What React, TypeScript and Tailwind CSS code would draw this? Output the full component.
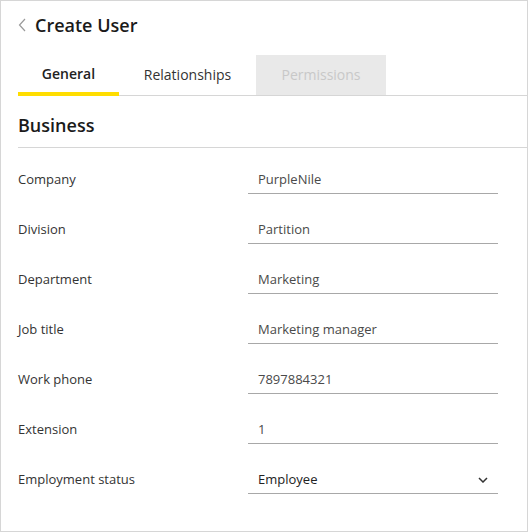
const rows = [
  { label: "Company", value: "PurpleNile" },
  { label: "Division", value: "Partition" },
  { label: "Department", value: "Marketing" },
  { label: "Job title", value: "Marketing manager" },
  { label: "Work phone", value: "7897884321" },
  { label: "Extension", value: "1" },
];

const App = () => {
  return (
    <div
      className="w-[528px] h-[532px] border border-[#d6d6d6] bg-white text-[#333]"
      style={{ fontFamily: '"Open Sans", "Noto Sans", sans-serif' }}
    >
      <div className="flex items-center pl-[17px] pt-[11px] h-[26px] box-content">
        <svg width="9" height="14" viewBox="0 0 9 14" className="text-[#9a9a9a]">
          <path d="M7 1 L1.5 7 L7 13" fill="none" stroke="currentColor" strokeWidth="1.2" />
        </svg>
        <span className="ml-[8px] text-[18px] font-semibold text-[#1a1a1a] leading-none">
          Create User
        </span>
      </div>

      <div className="ml-[17px] mt-[17px] flex border-b border-[#d6d6d6] h-[41px]">
        <div className="w-[101px] h-[41px] flex items-center justify-center text-[14px] font-semibold text-[#222] border-b-4 border-[#ffdd00] mb-[-1px]">
          General
        </div>
        <div className="w-[137px] h-[40px] flex items-center justify-center text-[14px] text-[#333] pb-[2px]">
          Relationships
        </div>
        <div className="w-[130px] h-[40px] flex items-center justify-center text-[14px] text-[#c8c8c8] bg-[#e9e9e9] pb-[2px]">
          Permissions
        </div>
      </div>

      <div className="ml-[17px] h-[52px] flex items-end pb-[13px] border-b border-[#d6d6d6] text-[18px] font-semibold text-[#1a1a1a] leading-none">
        Business
      </div>

      <div className="mt-[7px]">
        {rows.map(({ label, value }) => (
          <div className="flex items-center h-[50px] pl-[17px]" key={label}>
            <div className="w-[230px] text-[13px]">{label}</div>
            <div className="w-[250px] h-[27px] border-b border-[#a8a8a8] pl-[10px] flex items-center text-[13px] text-[#4a4a4a]">
              {value}
            </div>
          </div>
        ))}
        <div className="flex items-center h-[50px] pl-[17px]">
          <div className="w-[230px] text-[13px]">Employment status</div>
          <div className="w-[250px] h-[27px] border-b border-[#a8a8a8] pl-[10px] pr-[10px] flex items-center justify-between text-[13px] text-[#222]">
            <span>Employee</span>
            <svg width="10" height="6" viewBox="0 0 10 6">
              <path d="M1 1 L5 5 L9 1" fill="none" stroke="#333" strokeWidth="1.5" />
            </svg>
          </div>
        </div>
      </div>
    </div>
  );
};

export default App;
